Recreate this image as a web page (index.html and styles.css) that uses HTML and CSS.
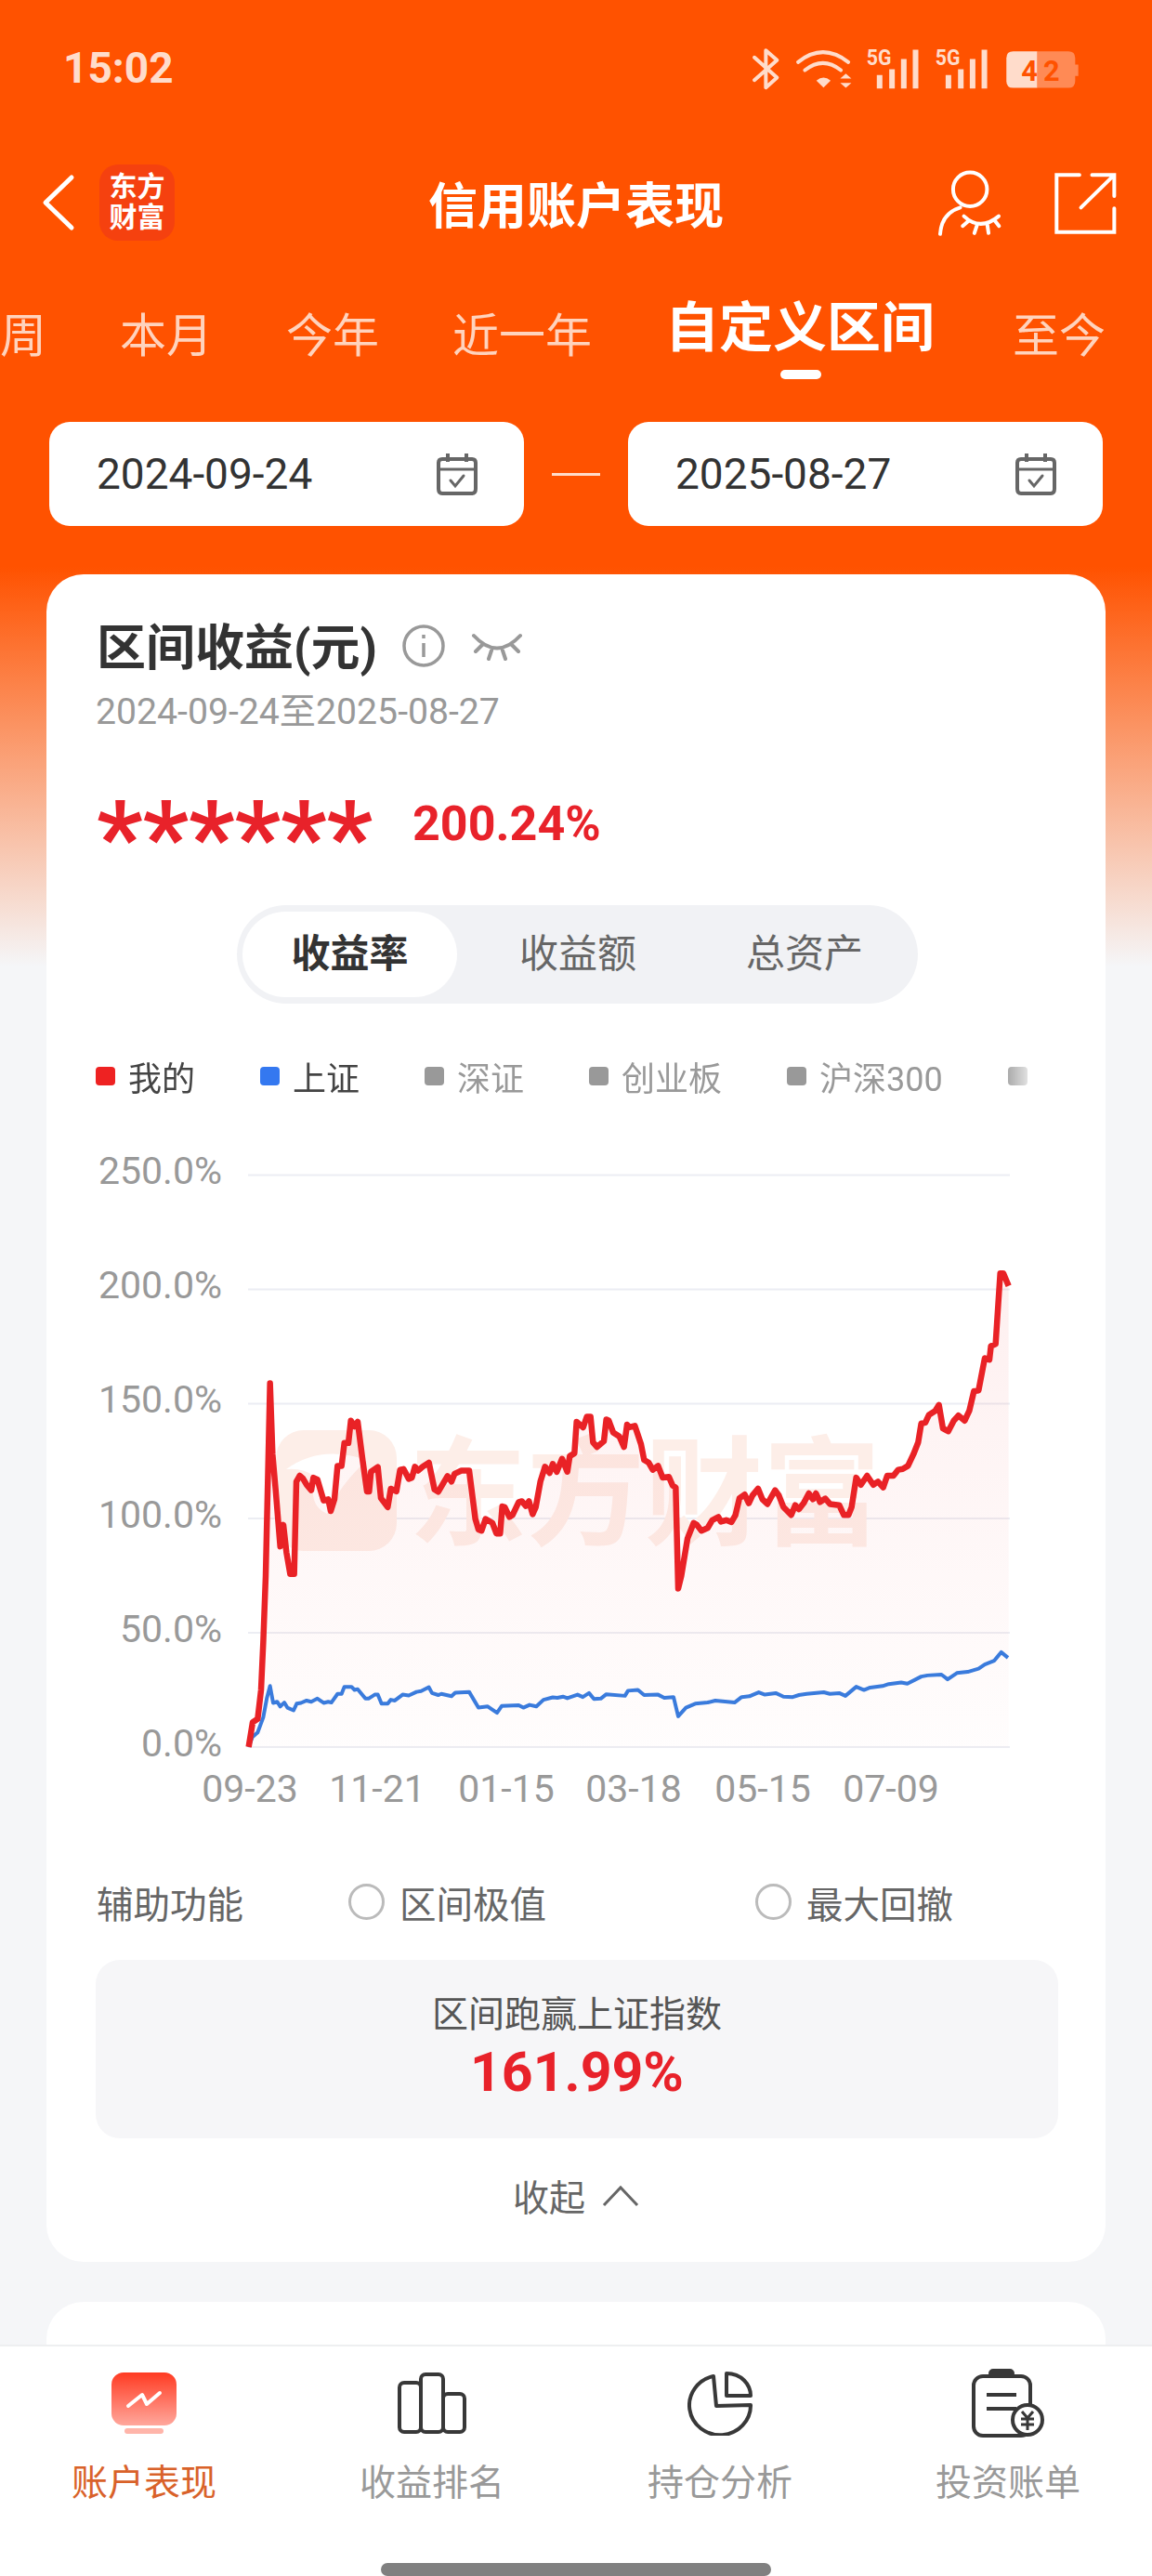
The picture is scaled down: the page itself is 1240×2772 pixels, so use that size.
FILE: index.html
```html
<!DOCTYPE html>
<html lang="zh-CN">
<head>
    <meta charset="UTF-8">
    <meta name="viewport" content="width=device-width, initial-scale=1.0">
    <title>信用账户表现</title>
    <link rel="stylesheet" href="styles.css">
</head>
<body>
<div class="app">
    <div class="page">
        <div class="status">
            <span class="time">15:02</span>
            <svg class="status-icons" viewBox="80 60 1070 140">
                <path class="bt" d="M95,95 L168,160 L132,192 V72 L168,104 L95,168"/>
                <path class="wf" d="M236,110 Q316,46 398,110"/>
                <path class="wf" d="M258,136 Q316,90 374,136"/>
                <path class="fl" d="M295,170 Q318,150 341,170 L318,192 Z"/>
                <path class="fl" d="M372,163 L390,147 L408,163 Z M372,177 L408,177 L390,193 Z"/>
                <text class="sig-label" x="457" y="120" textLength="80" lengthAdjust="spacingAndGlyphs">5G</text>
                <path class="fl" d="M490,152 h18 v43 h-18 Z M530,133 h18 v62 h-18 Z M568,100 h18 v95 h-18 Z M606,70 h18 v125 h-18 Z"/>
                <text class="sig-label" x="679" y="120" textLength="80" lengthAdjust="spacingAndGlyphs">5G</text>
                <path class="fl" d="M712,152 h18 v43 h-18 Z M752,133 h18 v62 h-18 Z M790,100 h18 v95 h-18 Z M828,70 h18 v125 h-18 Z"/>
                <path class="bat-left" d="M1008,75 H930 Q908,75 908,97 V171 Q908,193 930,193 H1008 Z"/>
                <path class="bat-right" d="M1008,75 H1108 Q1130,75 1130,97 V118 H1140 V155 H1130 V171 Q1130,193 1108,193 H1008 Z"/>
                <text class="bat-num" x="956" y="170" textLength="124">42</text>
            </svg>
        </div>

        <div class="nav">
            <div class="nav-left">
                <svg class="back" viewBox="0 0 40 64"><path d="M34,5 L6,32 L34,59"/></svg>
                <div class="logo">东方<br>财富</div>
            </div>
            <div class="nav-title">信用账户表现</div>
            <div class="nav-right">
                <svg class="nav-icon" viewBox="680 445 220 225">
                    <circle cx="792" cy="513" r="55"/>
                    <path d="M760,572 Q700,590 695,658"/>
                    <path d="M772,600 Q825,650 885,600 M788,615 L768,632 M815,628 L806,655 M848,628 L852,655 M870,612 L886,632"/>
                </svg>
                <svg class="nav-icon" viewBox="1055 445 220 225">
                    <path d="M1145,466 H1071 V652 H1258 V575"/>
                    <path d="M1150,572 L1256,468 M1186,466 H1258 V535"/>
                </svg>
            </div>
        </div>

        <div class="tabs">
            <span class="tab">周</span>
            <span class="tab">本月</span>
            <span class="tab">今年</span>
            <span class="tab">近一年</span>
            <span class="tab active">自定义区间</span>
            <span class="tab">至今</span>
        </div>

        <div class="dates">
            <div class="date-box">
                <span>2024-09-24</span>
                <svg class="cal" viewBox="0 0 46 46"><path d="M3,11 Q3,7 7,7 H39 Q43,7 43,11 V39 Q43,44 39,44 H7 Q3,44 3,39 Z"/><path d="M3,18 H43" class="thick"/><path d="M13,1 V10 M33,1 V10"/><path d="M16,30 L21,36 L30,25" class="thin"/></svg>
            </div>
            <div class="date-dash"></div>
            <div class="date-box">
                <span>2025-08-27</span>
                <svg class="cal" viewBox="0 0 46 46"><path d="M3,11 Q3,7 7,7 H39 Q43,7 43,11 V39 Q43,44 39,44 H7 Q3,44 3,39 Z"/><path d="M3,18 H43" class="thick"/><path d="M13,1 V10 M33,1 V10"/><path d="M16,30 L21,36 L30,25" class="thin"/></svg>
            </div>
        </div>

        <div class="card">
            <div class="card-head">
                <h2 class="card-title">区间收益(元)</h2>
                <svg class="info" viewBox="0 0 46 46"><circle cx="23" cy="23" r="21"/><path d="M23,20 V35"/><path d="M23,11 V15"/></svg>
                <svg class="eye" viewBox="0 0 56 32"><path d="M3,5 Q28,32 53,5 M12,15 L5,22 M22,21 L19,30 M34,21 L37,30 M44,15 L51,22"/></svg>
            </div>
            <div class="card-sub">2024-09-24至2025-08-27</div>
            <div class="value-row">
                <span class="stars">******</span>
                <span class="pct">200.24%</span>
            </div>

            <div class="seg">
                <span class="seg-item on">收益率</span>
                <span class="seg-item">收益额</span>
                <span class="seg-item">总资产</span>
            </div>

            <div class="legend">
                <span class="leg-item dark"><i class="dot red"></i>我的</span>
                <span class="leg-item dark"><i class="dot blue"></i>上证</span>
                <span class="leg-item"><i class="dot"></i>深证</span>
                <span class="leg-item"><i class="dot"></i>创业板</span>
                <span class="leg-item"><i class="dot"></i>沪深300</span>
                <span class="leg-item"><i class="dot"></i></span>
            </div>

            <svg class="chart" viewBox="100 1230 1040 740">
                <defs>
                    <linearGradient id="areaFill" x1="0" y1="0" x2="0" y2="1">
                        <stop offset="0" stop-color="#ee2222" stop-opacity=".07"/>
                        <stop offset="1" stop-color="#ee2222" stop-opacity=".01"/>
                    </linearGradient>
                </defs>
                <g class="grid">
                    <path d="M267,1265.5 H1087 M267,1388.5 H1087 M267,1511.5 H1087 M267,1635 H1087 M267,1758 H1087 M267,1881 H1087"/>
                </g>
                <g class="ylabels">
                    <text x="239" y="1275">250.0%</text>
                    <text x="239" y="1398">200.0%</text>
                    <text x="239" y="1521">150.0%</text>
                    <text x="239" y="1645">100.0%</text>
                    <text x="239" y="1768">50.0%</text>
                    <text x="239" y="1891">0.0%</text>
                </g>
                <g class="xlabels">
                    <text x="269" y="1940">09-23</text>
                    <text x="406" y="1940">11-21</text>
                    <text x="545" y="1940">01-15</text>
                    <text x="682" y="1940">03-18</text>
                    <text x="821" y="1940">05-15</text>
                    <text x="959" y="1940">07-09</text>
                </g>
                <g class="mark">
                    <rect x="297" y="1540" width="130" height="130" rx="30"/>
                    <path class="mark-cut" d="M308,1582 Q345,1555 395,1572 Q365,1600 352,1630 Q330,1620 340,1590 Q325,1580 308,1582 Z"/>
                    <text x="440" y="1654">东方财富</text>
                </g>
                <g transform="translate(200 1240) scale(.33333 .42301)">
                    <path class="area" d="M203,1515 L216,1452 L232,1444 L243,1370 L250,1250 L258,1080 L266,800 L272,590 L280,770 L290,860 L305,1005 L315,950 L325,1020 L337,1075 L350,1075 L357,840 L368,825 L378,832 L390,848 L405,862 L412,830 L425,835 L445,888 L460,885 L468,915 L480,885 L490,800 L503,800 L512,742 L525,742 L533,685 L545,700 L555,688 L570,780 L585,865 L592,865 L598,815 L620,803 L630,882 L652,905 L662,858 L680,865 L692,810 L703,808 L720,833 L730,830 L740,802 L750,812 L765,802 L785,792 L803,860 L815,866 L845,826 L858,840 L868,820 L890,812 L915,812 L935,935 L945,962 L955,965 L968,935 L990,945 L1003,972 L1015,972 L1022,903 L1030,905 L1045,930 L1055,925 L1075,892 L1085,890 L1098,902 L1108,890 L1120,923 L1130,905 L1145,840 L1160,802 L1175,818 L1185,795 L1198,815 L1215,782 L1232,815 L1240,775 L1255,768 L1262,688 L1283,702 L1295,675 L1307,675 L1315,740 L1328,752 L1350,737 L1358,682 L1366,685 L1380,715 L1400,725 L1415,752 L1425,695 L1432,702 L1450,698 L1470,745 L1480,785 L1495,792 L1508,810 L1525,800 L1540,830 L1560,828 L1572,850 L1582,855 L1590,1112 L1600,1080 L1620,985 L1640,945 L1650,950 L1665,965 L1685,958 L1700,938 L1720,930 L1728,942 L1745,938 L1762,943 L1775,925 L1788,882 L1805,873 L1818,895 L1830,875 L1848,858 L1862,885 L1878,897 L1890,880 L1903,862 L1915,875 L1930,905 L1955,925 L1968,900 L1980,910 L1995,895 L2012,870 L2025,885 L2035,870 L2048,892 L2065,883 L2080,897 L2110,900 L2125,925 L2140,925 L2150,905 L2165,830 L2180,848 L2200,825 L2220,848 L2235,840 L2252,855 L2265,825 L2285,825 L2300,810 L2315,808 L2332,800 L2350,770 L2365,740 L2375,692 L2388,690 L2400,670 L2420,660 L2432,645 L2445,705 L2462,712 L2480,685 L2495,672 L2515,685 L2530,660 L2545,610 L2560,608 L2580,526 L2595,530 L2600,495 L2615,490 L2630,310 L2640,310 L2657,342 L2657,1516 L203,1516 Z"/>
                    <path class="line-blue" d="M203,1515 L215,1490 L232,1478 L250,1440 L262,1390 L272,1360 L282,1403 L295,1400 L305,1412 L318,1402 L328,1415 L348,1422 L358,1405 L372,1403 L390,1397 L405,1400 L425,1392 L445,1403 L460,1400 L470,1402 L490,1380 L503,1380 L512,1362 L535,1362 L545,1370 L555,1368 L580,1392 L590,1392 L610,1382 L620,1382 L632,1405 L652,1405 L662,1395 L675,1397 L700,1382 L720,1384 L745,1375 L760,1373 L785,1363 L795,1378 L815,1383 L825,1380 L858,1386 L870,1377 L915,1375 L945,1415 L975,1412 L1005,1428 L1020,1411 L1075,1409 L1090,1415 L1110,1408 L1132,1412 L1155,1395 L1185,1389 L1200,1390 L1218,1387 L1232,1391 L1265,1382 L1282,1388 L1302,1378 L1318,1393 L1340,1392 L1358,1381 L1418,1385 L1428,1372 L1460,1370 L1480,1383 L1525,1382 L1545,1390 L1575,1388 L1590,1437 L1615,1415 L1645,1405 L1685,1402 L1710,1397 L1772,1402 L1795,1388 L1820,1386 L1850,1376 L1870,1382 L1905,1378 L1930,1387 L1960,1388 L1980,1383 L2005,1380 L2060,1376 L2080,1380 L2110,1378 L2130,1385 L2165,1362 L2190,1370 L2210,1364 L2250,1360 L2270,1355 L2310,1351 L2330,1354 L2375,1336 L2395,1333 L2440,1331 L2460,1343 L2490,1327 L2525,1324 L2560,1316 L2580,1305 L2610,1296 L2633,1274 L2655,1288"/>
                    <path class="line-red" d="M203,1515 L216,1452 L232,1444 L243,1370 L250,1250 L258,1080 L266,800 L272,590 L280,770 L290,860 L305,1005 L315,950 L325,1020 L337,1075 L350,1075 L357,840 L368,825 L378,832 L390,848 L405,862 L412,830 L425,835 L445,888 L460,885 L468,915 L480,885 L490,800 L503,800 L512,742 L525,742 L533,685 L545,700 L555,688 L570,780 L585,865 L592,865 L598,815 L620,803 L630,882 L652,905 L662,858 L680,865 L692,810 L703,808 L720,833 L730,830 L740,802 L750,812 L765,802 L785,792 L803,860 L815,866 L845,826 L858,840 L868,820 L890,812 L915,812 L935,935 L945,962 L955,965 L968,935 L990,945 L1003,972 L1015,972 L1022,903 L1030,905 L1045,930 L1055,925 L1075,892 L1085,890 L1098,902 L1108,890 L1120,923 L1130,905 L1145,840 L1160,802 L1175,818 L1185,795 L1198,815 L1215,782 L1232,815 L1240,775 L1255,768 L1262,688 L1283,702 L1295,675 L1307,675 L1315,740 L1328,752 L1350,737 L1358,682 L1366,685 L1380,715 L1400,725 L1415,752 L1425,695 L1432,702 L1450,698 L1470,745 L1480,785 L1495,792 L1508,810 L1525,800 L1540,830 L1560,828 L1572,850 L1582,855 L1590,1112 L1600,1080 L1620,985 L1640,945 L1650,950 L1665,965 L1685,958 L1700,938 L1720,930 L1728,942 L1745,938 L1762,943 L1775,925 L1788,882 L1805,873 L1818,895 L1830,875 L1848,858 L1862,885 L1878,897 L1890,880 L1903,862 L1915,875 L1930,905 L1955,925 L1968,900 L1980,910 L1995,895 L2012,870 L2025,885 L2035,870 L2048,892 L2065,883 L2080,897 L2110,900 L2125,925 L2140,925 L2150,905 L2165,830 L2180,848 L2200,825 L2220,848 L2235,840 L2252,855 L2265,825 L2285,825 L2300,810 L2315,808 L2332,800 L2350,770 L2365,740 L2375,692 L2388,690 L2400,670 L2420,660 L2432,645 L2445,705 L2462,712 L2480,685 L2495,672 L2515,685 L2530,660 L2545,610 L2560,608 L2580,526 L2595,530 L2600,495 L2615,490 L2630,310 L2640,310 L2657,342"/>
                </g>
            </svg>

            <div class="aux">
                <span class="aux-label">辅助功能</span>
                <span class="aux-opt first"><i class="radio"></i>区间极值</span>
                <span class="aux-opt"><i class="radio"></i>最大回撤</span>
            </div>

            <div class="beat">
                <div class="beat-label">区间跑赢上证指数</div>
                <div class="beat-num">161.99%</div>
            </div>

            <div class="collapse">收起
                <svg class="up" viewBox="0 0 40 24"><path d="M2,22 L20,3 L38,22"/></svg>
            </div>
        </div>

        <div class="card card-next"></div>
    </div>

    <div class="tabbar">
        <div class="bar-items">
            <div class="bar-item on">
                <div class="bar-icon">
                    <svg width="70" height="66" viewBox="0 0 70 66">
                        <defs>
                            <linearGradient id="barRed" x1="0" y1="0" x2="0" y2="1">
                                <stop offset="0" stop-color="#ff3b22"/>
                                <stop offset="1" stop-color="#ffa79c"/>
                            </linearGradient>
                        </defs>
                        <rect width="70" height="57" rx="13" fill="url(#barRed)"/>
                        <rect x="14" y="60" width="42" height="6" rx="3" fill="#ffb5aa"/>
                        <path d="M18,36 L33,24 L38,34 L52,22" fill="none" stroke="#fff" stroke-width="4" stroke-linecap="round" stroke-linejoin="round"/>
                    </svg>
                </div>
                账户表现
            </div>
            <div class="bar-item">
                <div class="bar-icon">
                    <svg class="stroke-icon" width="74" height="66" viewBox="0 0 74 66">
                        <rect x="2" y="11" width="23" height="53" rx="5"/>
                        <rect x="25" y="2" width="24" height="62" rx="5"/>
                        <rect x="49" y="23" width="23" height="41" rx="5"/>
                    </svg>
                </div>
                收益排名
            </div>
            <div class="bar-item">
                <div class="bar-icon">
                    <svg class="stroke-icon" width="70" height="70" viewBox="0 0 70 70">
                        <path d="M28,6 A33,32 0 1 0 68,37 L31,38 Z"/>
                        <path d="M42,3 C58,3 68,15 68,27 L42,27 Z"/>
                    </svg>
                </div>
                持仓分析
            </div>
            <div class="bar-item">
                <div class="bar-icon">
                    <svg class="stroke-icon" width="78" height="74" viewBox="0 0 78 74">
                        <rect x="2" y="8" width="61" height="64" rx="10"/>
                        <rect x="20" y="2" width="24" height="6" rx="3" class="solid"/>
                        <path d="M16,28 H48 M16,43 H48"/>
                        <circle cx="60" cy="55" r="16" class="white"/>
                        <path class="yen" d="M54,46 L60,53 L66,46 M60,53 V66 M53,54 H67 M53,60 H67"/>
                    </svg>
                </div>
                投资账单
            </div>
        </div>
        <div class="home-bar"></div>
    </div>
</div>
</body>
</html>
```

FILE: styles.css
```css
*{
    box-sizing: border-box;
}
body{
    margin: 0;
    font-family: Roboto, "Noto Sans CJK SC", sans-serif;
    color: #333;
}
.app{
    width: 1240px;
    height: 2772px;
    overflow: hidden;
    background: #fff;
}
.page{
    height: 2523px;
    overflow: hidden;
    background: linear-gradient(#ff5200 0, #ff5200 610px, #f5f6f8 1040px);
}

/* status bar */
.status{
    height: 146px;
    display: flex;
    justify-content: space-between;
    align-items: center;
    padding: 0 76px 0 68px;
}
.time{
    font-size: 46px;
    font-weight: 700;
    color: #ffdccb;
}
.status-icons{
    width: 357px;
    height: 47px;
    overflow: visible;
}
.bt,.wf{
    fill: none;
    stroke: #ffdccb;
    stroke-width: 12;
    stroke-linejoin: round;
    stroke-linecap: round;
}
.fl{
    fill: #ffdccb;
}
.sig-label{
    font-size: 70px;
    font-weight: 700;
    fill: #ffdccb;
}
.bat-left{
    fill: #ffdccb;
}
.bat-right{
    fill: #ff8a55;
}
.bat-num{
    font-size: 92px;
    font-weight: 700;
    fill: #ff5200;
}

/* nav */
.nav{
    height: 144px;
    display: grid;
    grid-template-columns: 1fr auto 1fr;
    align-items: center;
    padding: 0 35px;
}
.nav-left{
    display: flex;
    align-items: center;
    gap: 24px;
    padding-left: 8px;
}
.back{
    width: 40px;
    height: 64px;
}
.back path{
    fill: none;
    stroke: #fff;
    stroke-width: 5;
    stroke-linecap: round;
    stroke-linejoin: round;
}
.logo{
    width: 81px;
    height: 82px;
    border-radius: 20px;
    background: #f5410f;
    color: #fff;
    font-size: 30px;
    line-height: 33px;
    font-weight: 700;
    text-align: center;
    padding-top: 7px;
}
.nav-title{
    font-size: 53px;
    font-weight: 700;
    color: #fff;
}
.nav-right{
    display: flex;
    justify-content: flex-end;
    gap: 52px;
}
.nav-icon{
    width: 73px;
    height: 75px;
    fill: none;
    stroke: #fff;
    stroke-width: 12;
    stroke-linecap: round;
}

/* tabs */
.tabs{
    height: 164px;
    display: flex;
    align-items: flex-start;
    gap: 79px;
    overflow: hidden;
    padding-left: 0;
}
.tab{
    position: relative;
    flex: none;
    margin-top: 37px;
    font-size: 50px;
    line-height: 70px;
    color: #ffd3bd;
}
.tab.active{
    margin-top: 28px;
    margin-right: 5px;
    font-size: 58px;
    font-weight: 700;
    color: #fff;
}
.tab.active::after{
    content: "";
    position: absolute;
    left: 124px;
    bottom: -20px;
    width: 44px;
    height: 10px;
    border-radius: 5px;
    background: #fff;
}

/* date pickers */
.dates{
    display: flex;
    align-items: center;
    padding: 0 53px;
}
.date-box{
    width: 511px;
    height: 112px;
    border-radius: 22px;
    background: #fff;
    display: flex;
    justify-content: space-between;
    align-items: center;
    padding: 0 49px 0 51px;
    font-size: 46px;
}
.date-dash{
    width: 52px;
    height: 3px;
    background: #ffdccb;
    margin: 0 30px;
}
.cal{
    width: 46px;
    height: 46px;
    fill: none;
    stroke: #666;
    stroke-width: 4;
}
.cal .thick{
    stroke-width: 3;
}
.cal .thin{
    stroke-width: 3;
    stroke-linecap: round;
}

/* main card */
.card{
    margin: 52px 50px 0;
    height: 1816px;
    border-radius: 40px;
    background: #fff;
    padding-top: 48px;
}
.card-next{
    margin-top: 43px;
    height: 200px;
}
.card-head{
    display: flex;
    align-items: center;
    height: 64px;
    padding-left: 54px;
}
.card-title{
    margin: 0;
    font-size: 53px;
    font-weight: 700;
    line-height: 66px;
}
.info{
    width: 46px;
    height: 46px;
    margin-left: 27px;
    margin-top: -6px;
    fill: none;
    stroke: #999;
    stroke-width: 3.5;
}
.eye{
    width: 56px;
    height: 32px;
    margin-left: 28px;
    margin-top: -6px;
    fill: none;
    stroke: #999;
    stroke-width: 4;
    stroke-linecap: round;
}
.card-sub{
    margin-top: 8px;
    padding-left: 53px;
    font-size: 39.2px;
    line-height: 56px;
    color: #999;
}
.value-row{
    margin-top: 62px;
    padding-left: 54px;
    display: flex;
    align-items: center;
    height: 60px;
}
.stars{
    width: 296px;
    height: 60px;
    font-size: 109px;
    font-weight: 700;
    line-height: 92px;
    color: #e8222a;
}
.pct{
    margin-left: 44px;
    font-size: 52px;
    font-weight: 700;
    color: #e8222a;
}

/* segmented */
.seg{
    margin: 58px 0 0 205px;
    width: 733px;
    height: 106px;
    border-radius: 53px;
    background: #f1f2f5;
    display: flex;
    align-items: center;
    padding-left: 6px;
}
.seg-item{
    width: 244px;
    height: 92px;
    line-height: 92px;
    text-align: center;
    font-size: 42px;
    color: #666;
}
.seg-item.on{
    width: 231px;
    margin-right: 8px;
    border-radius: 46px;
    background: #fff;
    color: #333;
    font-weight: 700;
}

/* legend */
.legend{
    margin: 52px 0 0 53px;
    width: 1022px;
    height: 52px;
    display: flex;
    align-items: center;
    gap: 70px;
    font-size: 36px;
    color: #999;
    -webkit-mask-image: linear-gradient(to right, #000 975px, transparent 1015px);
    mask-image: linear-gradient(to right, #000 975px, transparent 1015px);
}
.leg-item{
    flex: none;
    display: flex;
    align-items: center;
    gap: 14px;
}
.leg-item.dark{
    color: #444;
}
.dot{
    width: 21px;
    height: 20px;
    border-radius: 4px;
    background: #999;
}
.dot.red{
    background: #ee2222;
}
.dot.blue{
    background: #3478f0;
}

/* chart */
.chart{
    display: block;
    width: 1040px;
    height: 740px;
    margin: 45px 0 0 50px;
}
.grid path{
    fill: none;
    stroke: #ecedf3;
    stroke-width: 2;
}
.ylabels text{
    font-size: 41px;
    fill: #999;
    text-anchor: end;
}
.xlabels text{
    font-size: 41px;
    fill: #999;
    text-anchor: middle;
}
.mark rect{
    fill: #fdeee8;
}
.mark-cut{
    fill: #fff;
}
.mark text{
    font-size: 127px;
    font-weight: 700;
    fill: #fdeee8;
}
.area{
    fill: url(#areaFill);
}
.line-red,.line-blue{
    fill: none;
    vector-effect: non-scaling-stroke;
    stroke-linejoin: round;
}
.line-red{
    stroke: #e92226;
    stroke-width: 6.5;
}
.line-blue{
    stroke: #3a7bdc;
    stroke-width: 4;
}

/* aux row */
.aux{
    margin-top: 52px;
    height: 50px;
    display: flex;
    align-items: center;
    padding-left: 54px;
    font-size: 39.5px;
    color: #666;
}
.aux-label{
    flex: none;
}
.aux-opt{
    flex: none;
    display: flex;
    align-items: center;
    gap: 16px;
}
.aux-opt.first{
    width: 438px;
    margin-left: 113px;
}
.radio{
    width: 39px;
    height: 39px;
    border: 3px solid #bbb;
    border-radius: 50%;
}

/* beat box */
.beat{
    margin: 38px 51px 0 53px;
    height: 192px;
    border-radius: 26px;
    background: #f6f6f8;
    text-align: center;
    padding-top: 32px;
}
.beat-label{
    font-size: 39px;
    line-height: 54px;
    color: #555;
}
.beat-num{
    font-size: 59px;
    line-height: 70px;
    font-weight: 700;
    color: #e8222a;
}
.collapse{
    margin-top: 40px;
    display: flex;
    justify-content: center;
    align-items: center;
    gap: 18px;
    font-size: 39px;
    line-height: 50px;
    color: #666;
}
.up{
    width: 40px;
    height: 24px;
    margin-top: -6px;
    fill: none;
    stroke: #666;
    stroke-width: 3;
}

/* bottom tab bar */
.tabbar{
    height: 249px;
    border-top: 2px solid #eeeff1;
    background: #fff;
}
.bar-items{
    display: flex;
    padding-top: 24px;
}
.bar-item{
    width: 310px;
    text-align: center;
    font-size: 39px;
    line-height: 50px;
    color: #999;
}
.bar-item.on{
    color: #d9622a;
}
.bar-icon{
    height: 74px;
    margin-bottom: 24px;
    display: flex;
    justify-content: center;
    align-items: center;
}
.stroke-icon{
    fill: none;
    stroke: #383838;
    stroke-width: 4;
    stroke-linejoin: round;
}
.stroke-icon .solid{
    fill: #383838;
}
.stroke-icon .white{
    fill: #fff;
}
.stroke-icon .yen{
    stroke-width: 3;
}
.home-bar{
    width: 420px;
    height: 14px;
    margin: 61px auto 0;
    border-radius: 7px;
    background: #808080;
}
```
